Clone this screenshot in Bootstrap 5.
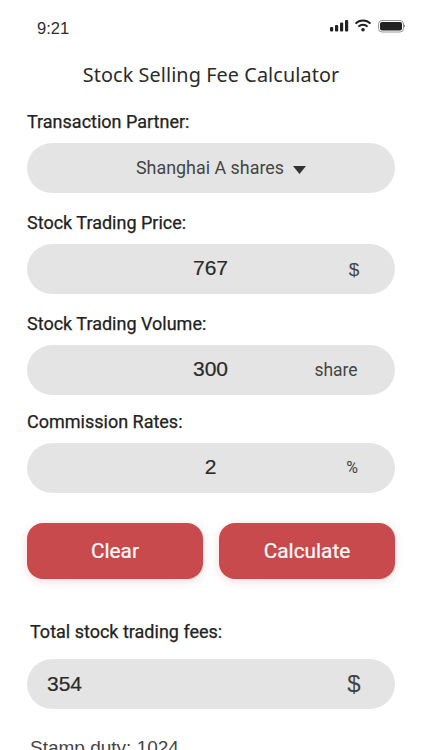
<!DOCTYPE html>
<html lang="en">
<head>
<meta charset="utf-8">
<title>Stock Selling Fee Calculator</title>
<link rel="stylesheet" href="https://cdn.jsdelivr.net/npm/bootstrap@5.3.0/dist/css/bootstrap.min.css">
<style>
html,body{height:750px;overflow:hidden;background:#fff}
body{font-family:Roboto,sans-serif;color:#2e2e2e}
.phone-status{height:62px;padding:17px 17px 0 37px;font:500 16.5px/22px "Liberation Sans",sans-serif}
.status-icons{margin-top:2px}
.page-title{font:400 19.8px/26px "Noto Sans",sans-serif;letter-spacing:.1px;text-align:center;margin:0;height:26px;color:#2a2a2a}
.sheet{padding:0 27px}
.field-label{font:400 18px/22px Roboto,sans-serif;margin:23px 0 0;height:22px;color:#222;-webkit-text-stroke:.25px #222}
.label-next{margin-top:19px}
.label-rate{margin-top:16px}
.label-total{margin:42px 0 0 3px}
.pill{height:50px;border-radius:25px;background:#e4e4e4;margin-top:10px}
.pill-result{margin-top:16px}
.pill-value{font:400 21px/47px "Liberation Sans",sans-serif;color:#2a2a2a;-webkit-text-stroke:.2px #2a2a2a;text-align:center}
.val-main{width:270px;padding-left:97px}
.val-left{padding-left:20px;line-height:49px}
.unit{font:400 17.5px/50px Roboto,sans-serif;color:#444;text-align:center;width:74px}
.unit-dollar{font:400 19px/51px "Liberation Sans",sans-serif;margin-right:4px}
.unit-share{line-height:51px;margin-right:22px}
.unit-pct{font-size:16px;margin-right:6px}
.unit-big{font:400 24px/49px "Liberation Sans",sans-serif;margin-right:4px}
.pill-select{padding-left:20px}
.select-text{font:400 17.9px/50px Roboto,sans-serif;color:#444}
.caret-tri{width:13px;height:8px;margin-left:9px;margin-top:4px}
.btn-row{margin-top:30px}
.red-btn{height:56px;width:176px;border:0;border-radius:16px;background:#c94a4c;color:#fff;font:400 20.8px/55px Roboto,sans-serif;-webkit-text-stroke:.2px #fff;padding:0;box-shadow:0 2px 8px rgba(201,74,76,.22)}
.stamp{font:400 19px/26px "Liberation Sans",sans-serif;color:#444;margin:26px 0 0 3px}
</style>
</head>
<body>
<div class="phone-status d-flex justify-content-between">
  <span>9:21</span>
  <svg width="75" height="14" viewBox="0 0 75 14" class="status-icons" aria-hidden="true">
    <g fill="#222">
      <rect x="0" y="8" width="3.2" height="4.500" rx="1"/>
      <rect x="5" y="6" width="3.2" height="6.500" rx="1"/>
      <rect x="10" y="3.500" width="3.200" height="9" rx="1"/>
      <rect x="15" y="1" width="3.200" height="11.500" rx="1"/>
      <circle cx="33" cy="10.800" r="1.800"/>
      <rect x="50" y="3" width="22" height="8.500" rx="2"/>
      <path d="M74 5.500q1.300 1.500 0 3z"/>
    </g>
    <g fill="none" stroke="#222" stroke-width="1.900">
      <path d="M25.500 4.600a10.500 10.500 0 0 1 15 0"/>
      <path d="M28.400 7.700a6.500 6.500 0 0 1 9.200 0"/>
    </g>
    <rect x="48.500" y="1.500" width="25" height="11.500" rx="3.500" fill="none" stroke="#999" stroke-width="1"/>
  </svg>
</div>
<h1 class="page-title">Stock Selling Fee Calculator</h1>
<main class="sheet">
  <p class="field-label">Transaction Partner:</p>
  <div class="pill pill-select d-flex align-items-center justify-content-center">
    <span class="select-text">Shanghai A shares</span>
    <svg class="caret-tri" viewBox="0 0 13 8" aria-hidden="true"><path d="M0 0h13L6.500 8z" fill="#333"/></svg>
  </div>
  <p class="field-label label-next">Stock Trading Price:</p>
  <div class="pill d-flex justify-content-between">
    <span class="pill-value val-main">767</span><span class="unit unit-dollar">$</span>
  </div>
  <p class="field-label label-next">Stock Trading Volume:</p>
  <div class="pill d-flex justify-content-between">
    <span class="pill-value val-main">300</span><span class="unit unit-share">share</span>
  </div>
  <p class="field-label label-rate">Commission Rates:</p>
  <div class="pill d-flex justify-content-between">
    <span class="pill-value val-main">2</span><span class="unit unit-pct">%</span>
  </div>
  <div class="btn-row d-flex justify-content-between">
    <button type="button" class="btn red-btn">Clear</button>
    <button type="button" class="btn red-btn">Calculate</button>
  </div>
  <p class="field-label label-total">Total stock trading fees:</p>
  <div class="pill pill-result d-flex justify-content-between">
    <span class="pill-value val-left">354</span><span class="unit unit-big">$</span>
  </div>
  <p class="stamp">Stamp duty: 1024</p>
</main>
</body>
</html>
